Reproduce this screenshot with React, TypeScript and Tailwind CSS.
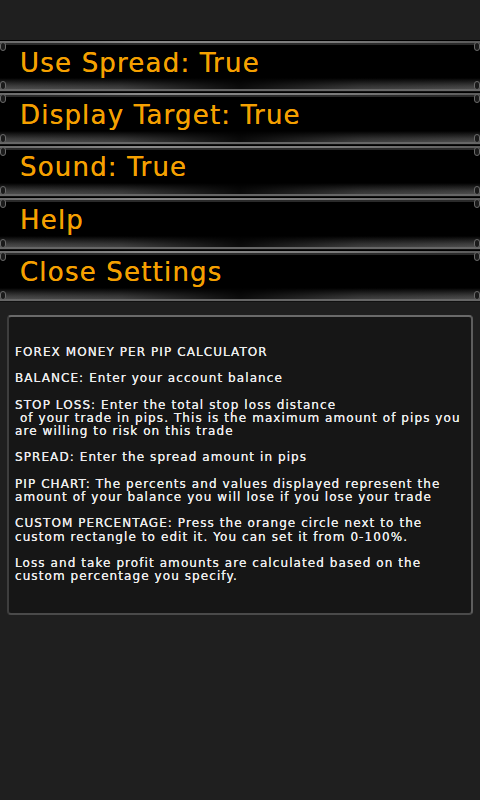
import React from "react";

const buttons = [
  "Use Spread: True",
  "Display Target: True",
  "Sound: True",
  "Help",
  "Close Settings",
];

const paragraphs: string[][] = [
  ["FOREX MONEY PER PIP CALCULATOR"],
  ["BALANCE: Enter your account balance"],
  [
    "STOP LOSS: Enter the total stop loss distance",
    " of your trade in pips. This is the maximum amount of pips you",
    "are willing to risk on this trade",
  ],
  ["SPREAD: Enter the spread amount in pips"],
  [
    "PIP CHART: The percents and values displayed represent the",
    "amount of your balance you will lose if you lose your trade",
  ],
  [
    "CUSTOM PERCENTAGE: Press the orange circle next to the",
    "custom rectangle to edit it. You can set it from 0-100%.",
  ],
  [
    "Loss and take profit amounts are calculated based on the",
    "custom percentage you specify.",
  ],
];

function Cap({ side }: { side: "l" | "r" }) {
  return (
    <div
      className={`absolute top-[2px] bottom-[2px] w-[6px] flex flex-col justify-between ${
        side === "l" ? "left-0" : "right-0"
      }`}
    >
      <div className="h-[9px] w-[6px] rounded-[3px] bg-[#1a1a1a] border border-[#6a6a6a]" />
      <div className="h-[9px] w-[6px] rounded-[3px] bg-[#1a1a1a] border border-[#6a6a6a]" />
    </div>
  );
}

function SettingButton({ label }: { label: string }) {
  return (
    <div className="relative h-[52.4px] flex flex-col bg-black">
      <div className="h-[2px] mt-[1px] bg-[linear-gradient(to_right,#6a6a6a,#8a8a8a_30%,#7a7a7a_70%,#5a5a5a)]" />
      <div className="h-[2px] bg-[#2a2a2a]" />
      <div className="flex-1 flex items-center pl-[20px]">
        <span
          className="text-[#f5a000] text-[26px] leading-none tracking-[1.2px] mt-[2px] [text-shadow:0_0_0.6px_#f5a000]"
          style={{ fontFamily: '"DejaVu Sans", sans-serif' }}
        >
          {label}
        </span>
      </div>
      <div className="relative h-[11px] bg-[linear-gradient(to_bottom,#000,#3c3c3c_70%,#4e4e4e)]">
        <div className="absolute inset-0 bg-[linear-gradient(to_right,rgba(0,0,0,0)_0%,rgba(0,0,0,0.15)_25%,rgba(0,0,0,0.85)_50%,rgba(0,0,0,0.2)_75%,rgba(0,0,0,0)_100%)]" />
      </div>
      <div className="h-[2px] bg-[#666]" />
      <div className="h-[1px] bg-[#111]" />
      <Cap side="l" />
      <Cap side="r" />
    </div>
  );
}

export default function App() {
  return (
    <div className="w-[480px] h-[800px] bg-[#1f1f1f] overflow-hidden">
      <div className="pt-[40px] flex flex-col">
        {buttons.map((b) => (
          <SettingButton key={b} label={b} />
        ))}
      </div>
      <div className="mt-[13px] mx-[7px] h-[300px] rounded-[4px] border-t-2 border-r-2 border-b-2 border-l-2 border-t-[#6a6a6a] border-r-[#5e5e5e] border-b-[#4a4a4a] border-l-[#3e3e3e] bg-[#161616] pt-[29px] pl-[6px]">
        <div
          className="flex flex-col gap-[13px] text-[#ececec] text-[12px] leading-[13.3px] tracking-[1.08px] [text-shadow:0_0_0.5px_#ffffff]"
          style={{ fontFamily: '"DejaVu Sans", sans-serif' }}
        >
          {paragraphs.map((p, i) => (
            <div key={i} className="flex flex-col">
              {p.map((line, j) => (
                <div key={j} className="whitespace-pre">
                  {line}
                </div>
              ))}
            </div>
          ))}
        </div>
      </div>
    </div>
  );
}
